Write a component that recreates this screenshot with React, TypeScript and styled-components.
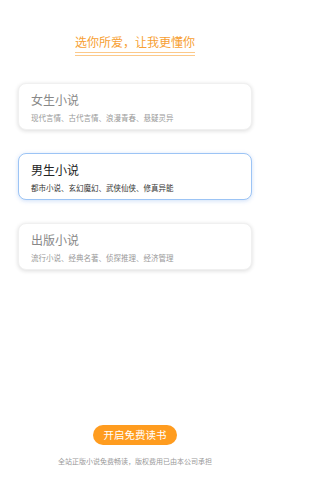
import React from 'react'
import styled, { createGlobalStyle, css } from 'styled-components'

const GlobalStyle = createGlobalStyle`
  html, body {
    margin: 0;
    padding: 0;
    background: #ffffff;
  }
  body {
    font-family: "Noto Sans CJK SC", "Noto Sans", sans-serif;
  }
`

const Page = styled.div`
  width: 270px;
  height: 480px;
  display: flex;
  flex-direction: column;
  align-items: center;
  box-sizing: border-box;
  padding-top: 33px;
`

const Heading = styled.div`
  display: flex;
  flex-direction: column;
  align-items: center;
`

const HeadingText = styled.h1`
  margin: 0;
  font-size: 12px;
  line-height: 17px;
  font-weight: 400;
  color: #f7a032;
`

// 二重の下線
const DoubleLine = styled.div`
  width: 120px;
  height: 2px;
  margin-top: 2px;
  border-top: 1px solid #fcc98a;
  border-bottom: 1px solid #fcc98a;
`

const CardList = styled.div`
  display: flex;
  flex-direction: column;
  gap: 23px;
  margin-top: 27px;
  width: 234px;
`

const Card = styled.div<{ $active?: boolean }>`
  height: 47px;
  box-sizing: border-box;
  padding: 8px 12px 0;
  border-radius: 8px;
  background: #fff;
  border: 1px solid #f0f0f0;
  box-shadow: 0 1px 4px rgba(0, 0, 0, 0.14);

  ${(p) =>
    p.$active &&
    css`
      border-color: #9cc4f5;
      box-shadow: 0 1px 4px rgba(80, 140, 230, 0.28);
    `}
`

const CardTitle = styled.div<{ $active?: boolean }>`
  font-size: 12px;
  line-height: 16px;
  color: ${(p) => (p.$active ? '#222' : '#888')};
`

const CardDesc = styled.div<{ $active?: boolean }>`
  margin-top: 5px;
  font-size: 7.5px;
  line-height: 10px;
  color: ${(p) => (p.$active ? '#333' : '#999')};
  white-space: nowrap;
`

const Spacer = styled.div`
  flex: 1;
`

const StartButton = styled.button`
  width: 84px;
  height: 20px;
  border: none;
  border-radius: 10px;
  background: #ff9c1f;
  color: #fff;
  font-family: inherit;
  font-size: 10.5px;
  line-height: 20px;
  padding: 0;
  cursor: pointer;
`

const Footnote = styled.p`
  margin: 11px 0 14px;
  font-size: 7px;
  line-height: 10px;
  color: #999;
`

const categories = [
  { title: '女生小说', desc: '现代言情、古代言情、浪漫青春、悬疑灵异' },
  { title: '男生小说', desc: '都市小说、玄幻魔幻、武侠仙侠、修真异能', active: true },
  { title: '出版小说', desc: '流行小说、经典名著、侦探推理、经济管理' },
]

const App = () => {
  return (
    <>
      <GlobalStyle />
      <Page>
        <Heading>
          <HeadingText>选你所爱，让我更懂你</HeadingText>
          <DoubleLine />
        </Heading>
        <CardList>
          {categories.map((c) => (
            <Card key={c.title} $active={c.active}>
              <CardTitle $active={c.active}>{c.title}</CardTitle>
              <CardDesc $active={c.active}>{c.desc}</CardDesc>
            </Card>
          ))}
        </CardList>
        <Spacer />
        <StartButton>开启免费读书</StartButton>
        <Footnote>全站正版小说免费畅读，版权费用已由本公司承担</Footnote>
      </Page>
    </>
  )
}

export default App
